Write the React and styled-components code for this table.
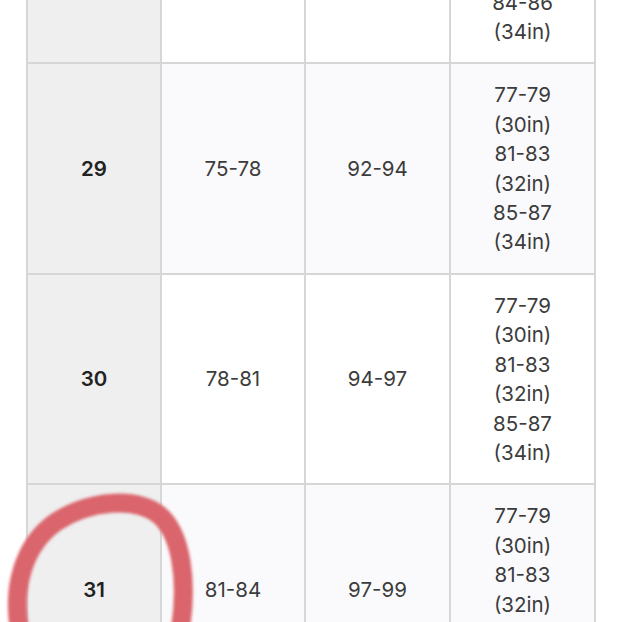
import React from 'react';
import styled, { createGlobalStyle } from 'styled-components';

const Global = createGlobalStyle`
  html, body {
    margin: 0;
    padding: 0;
    background: #fff;
  }
`;

const Page = styled.div`
  position: relative;
  width: 622px;
  height: 622px;
  overflow: hidden;
  padding-left: 26px;
  box-sizing: border-box;
  font-family: Inter, "Noto Sans CJK JP", sans-serif;
`;

const Table = styled.table`
  border-collapse: collapse;
  margin-top: -148px;
  table-layout: fixed;
`;

const Cell = styled.td`
  width: ${p => p.$w}px;
  height: 176px;
  padding: 16px 0;
  border: 2px solid #d6d6d6;
  text-align: center;
  vertical-align: middle;
  font-size: 20.5px;
  line-height: 29.4px;
  color: #3c3c3c;
  background: ${p => (p.$shade ? '#fafafc' : '#ffffff')};
`;

const SizeCell = styled(Cell)`
  background: #efefef;
  font-weight: 600;
  color: #222;
`;

const Mark = styled.svg`
  position: absolute;
  left: 0;
  top: 0;
  pointer-events: none;
`;

const inseam = ['77-79', '(30in)', '81-83', '(32in)'];

const rows = [
  { size: '28', waist: '72-75', hip: '89-92', leg: [...inseam, '84-86', '(34in)'] },
  { size: '29', waist: '75-78', hip: '92-94', leg: [...inseam, '85-87', '(34in)'] },
  { size: '30', waist: '78-81', hip: '94-97', leg: [...inseam, '85-87', '(34in)'] },
  { size: '31', waist: '81-84', hip: '97-99', leg: [...inseam, '85-87', '(34in)'] },
];

export default function App() {
  return (
    <>
      <Global />
      <Page>
        <Table>
          <tbody>
            {rows.map((r, i) => (
              <tr key={r.size}>
                <SizeCell $w={132}>{r.size}</SizeCell>
                <Cell $w={142} $shade={i % 2 === 1}>{r.waist}</Cell>
                <Cell $w={143} $shade={i % 2 === 1}>{r.hip}</Cell>
                <Cell $w={143} $shade={i % 2 === 1}>
                  {r.leg.map((l, j) => (
                    <div key={j}>{l}</div>
                  ))}
                </Cell>
              </tr>
            ))}
          </tbody>
        </Table>
        <Mark width="622" height="622" viewBox="0 0 622 622">
          <defs>
            <filter id="soft">
              <feGaussianBlur stdDeviation="1.6" />
            </filter>
          </defs>
          <path
            d="M 20 632 C 12 590, 22 546, 56 522 C 90 500, 134 497, 158 514 C 182 533, 188 582, 180 632"
            fill="none"
            stroke="#da656c"
            strokeWidth="19"
            strokeLinecap="round"
            filter="url(#soft)"
          />
        </Mark>
      </Page>
    </>
  );
}
